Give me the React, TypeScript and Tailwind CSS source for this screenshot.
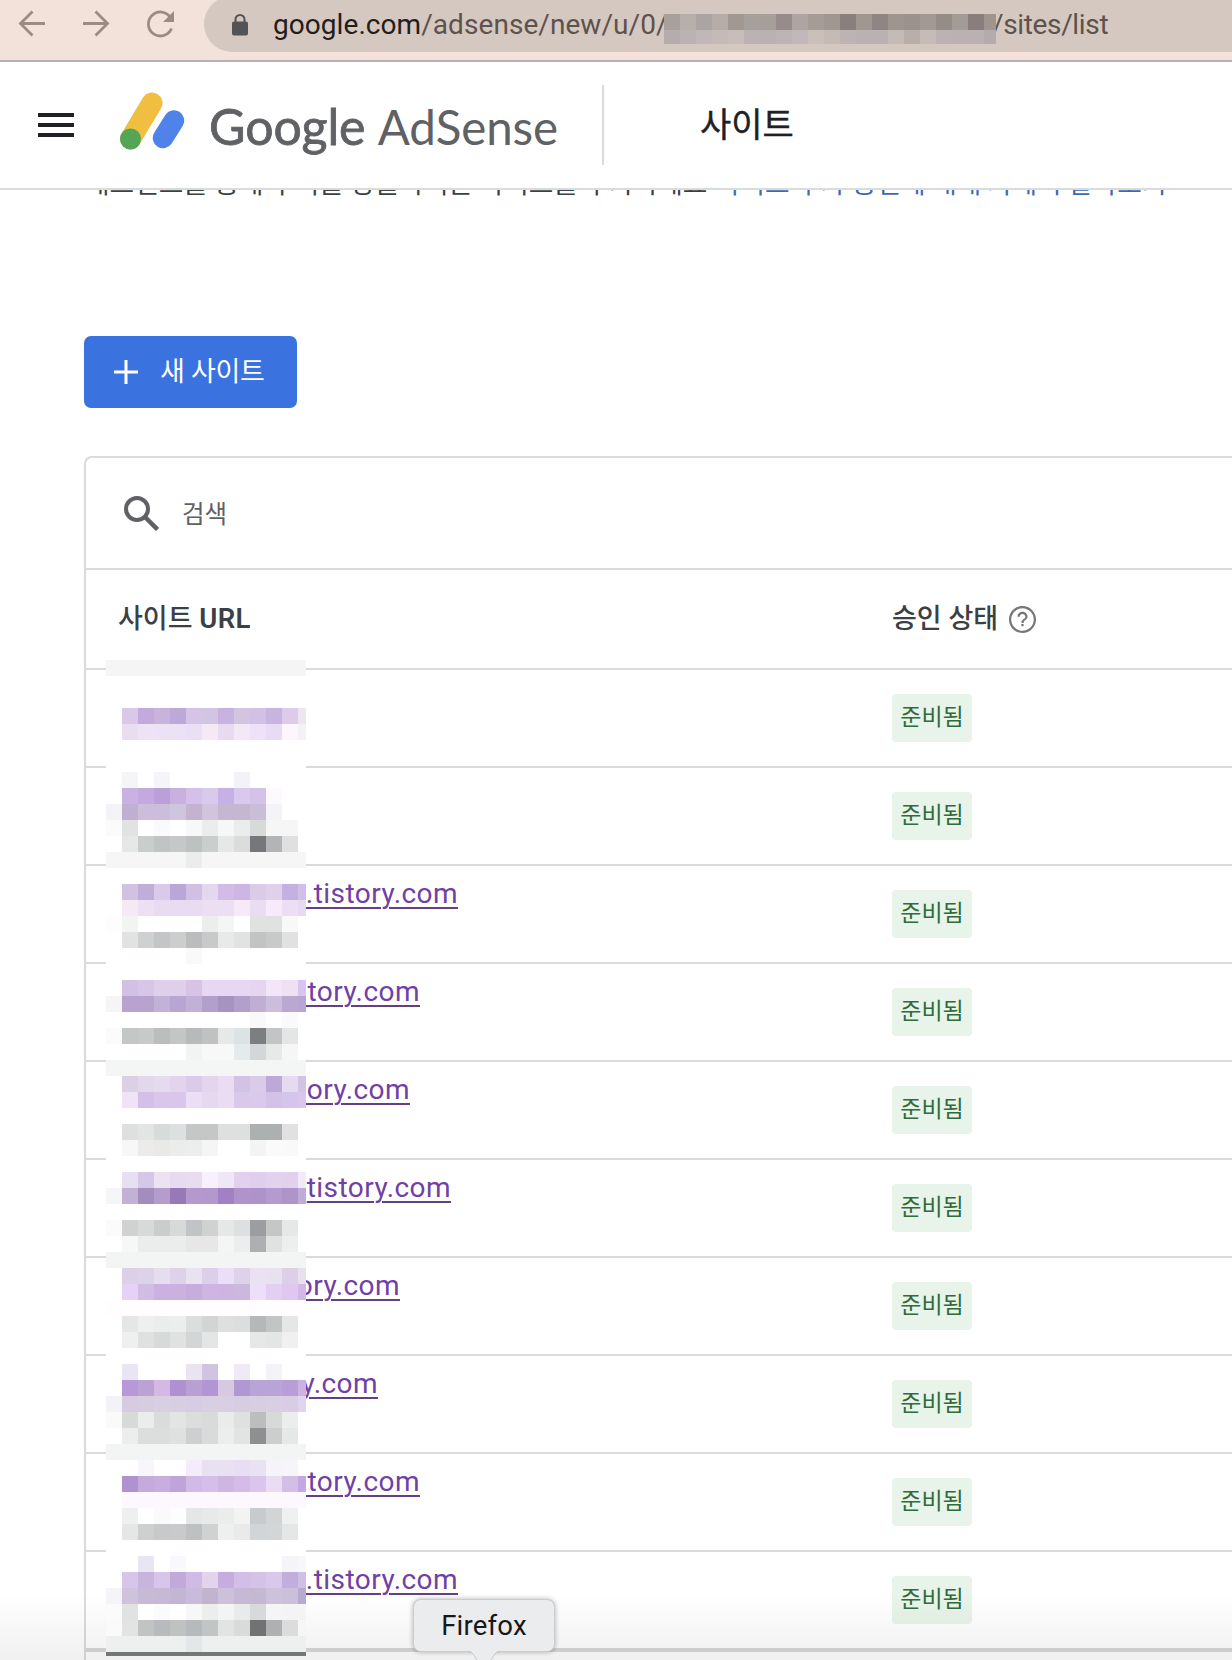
import React from "react";

const W = "fff";

/* Pixelated censor blocks: one string per 16px row, 13 cells (the last one is half width). */
const MOSAIC: string[] = [
  "f5f5f5*",
  W + "*",
  W + "*",
  "fff dac8e8 c2aadc c8b3dd bda8da d5c4e8 d1c5e4 c8b2e0 d1c5e0 d1c1e4 c7b5df decbea ebe6f1",
  "fff e9ddf1 ede3f5 ede1f5 ede1f5 ebdff5 f6e8f5 e8daf1 f3e8f7 eee1f8 e8dbf4 fdf6fd f4f2f5",
  W + "*",
  W + "*",
  "fff f5f4f7 fff f5f4f8 fff fff fff fff f3f2f9 fff fff fff fff",
  "fff c9b1e2 c3a9df bb9fd9 c8b1df d5c0ea d9c9ec c7b0e5 dac9ef d4c2e9 fcfafc fff fff",
  "f4f3f8 bfb0d3 ccbddb ccbddb d0c5de c3b3d1 d2c4de c5b6d2 c5b6d2 cabdd9 f3f3f8 fff fff",
  "fbfbfb e0e3e2 fff fafafc fff f7f8f7 ebedec f6f7f7 ebecec d8dada f6f6f6 f5f6f5 fff",
  "fff e6e7e7 c9cdcc c1c4c5 c6c7c9 bdc1c0 cacecd e6e7e7 dbdddd 75777a b3b4b5 e0e0e0 fff",
  "f5f6f5 f5f6f5 f5f6f5 f5f6f5 f5f6f5 ebecec f5f6f5 f5f6f5 f5f6f5 f5f6f5 f5f6f5 f5f6f5 f5f6f5",
  W + "*",
  "fff d1c2e1 c1add9 dac9ea bba7d7 d2c0e4 e4d8ee d2bce7 cdb6e4 dbcbe7 e1d0eb c5b0e2 d1bfe7",
  "fff f6e9f5 ede0f2 e9dcf2 e9dcf2 e9dbf2 ecdff4 ecdff4 f7e9f7 eadcf2 f8e9fb eddff3 e8d9f1",
  "fdfdfd f2f4f3 fff fff fff fff ededed f4f6f5 fff e0e1e1 e0e1e1 f8f8f8 fff",
  "fff e1e3e2 ced1d1 c3c5c6 cbcecd babcbe c8caca e8e9e8 e1e2e2 c2c4c3 c8cac9 e1e1e2 fff",
  "fff fff fff fff fff f9f9f9 fff fff fff fff fff fff fff",
  W + "*",
  "fff d1c1e5 d7c6e8 dfcfea dfcfea d8c3e6 e7d7f2 e7d7f2 e7d7f2 e5d5f1 f1e7f8 eee1f4 d7c4ef",
  "f5f5f7 b8a2ce b8a2ce c3b2d8 b8a5d2 c2b1d7 b2a0cb a893be b2a0ca c1aed3 cbbddb baa8d2 b9a5d3",
  "fff fff fff fff fff fff fff fff fff f9f9f9 fff fafafa fff",
  "fafbfa c3c7c6 c7cac9 babebc c4c6c5 b7babb c0c2c1 e6e9e7 dce3e4 7b7f7f c2c4c5 e4e5e5 fff",
  "fff fff fff fff fff f2f3f3 f8f8f8 f8f8f8 e5eaea d4d7da e7e8e8 f6f6f6 fff",
  "f4f5f5*",
  "fff dcd0e6 e1d8ec e4dbee e2d4ed dacbe8 e3d5ee e9dcf3 d2c3e6 d9cbea bca9d7 e6daf1 d1c3e3",
  "fff f1e3f6 d4bfe8 dac6eb dac6eb ecdff5 e5d8ef eadcf2 d9c8e9 dac9eb d4c1e8 d6c5ea d9c6ea",
  W + "*",
  "fff dee0e0 e3e5e5 d7dbda dce0e0 c5c7c6 c5c7c6 dedfdf dedfdf adb0b1 adb0b1 e1e1e1 fff",
  "fff f7f7f7 ebecea e9eae8 ebedeb eceeed f4f5f4 fff fff f3f5f4 fafafa f9f9f9 fff",
  W + "*",
  "fff e6e0f2 d5c8e7 ede2f2 e6dbf0 e8ddf0 f7f0fd eee7f6 e2d0ec e0cfec e2d2ed e1d1ec f1ebf7",
  "f5f6f7 c2b0d5 a38dba b49ccc 9779b8 b499cf b298cf a180c3 b093cb ae93cb b49bcf ae94c9 c1acd7",
  W + "*",
  "fbfbfb d0d2d1 d8dad9 c9cdcc d8d9d9 c1c4c6 d0d2d1 e6e8e7 dce0e0 9b9da0 c5c7c7 e5e8e6 fff",
  "fff f6f8f7 eaedeb ebedec ebedec e6e7e6 e6e7e6 f4f5f4 eceeed adafb0 e0e2e1 edefee fff",
  "f3f4f4*",
  "fff dbd0e8 dcd3e8 e4deef ddd2ea e8e3f1 dccfe9 ebdef7 ded1ea eae2f2 e8e2f0 dbd0e8 e6e1ec",
  "fff e5d2f6 d1bce3 cab1e0 cab1e0 c7addd cfb5e4 cdb4e1 ccb7dd eddff9 e2cff1 dfc7ef d1b8e6",
  "fffdff*",
  "fff e5e7e6 eeefee ebecec ebeeec dcdedd d3d5d4 dedfde dcdedd b5b7b9 c3c5c5 e5e7e6 fff",
  "fff eeefee dfe1e0 d6dad9 e0e2e1 d2d6d6 e4e6e5 fff fff e6e8e7 e2e6e4 f0f0f0 fff",
  W + "*",
  "fff eae5f2 fff fff fff eae4f1 d1c4e0 fff efeaf6 fff f4f3f7 fff fff",
  "fff b699d6 baa3d4 d3b9e3 af91d1 b8a0d5 b296d3 d7c8e3 b098d2 b9a4d8 b9a4d8 b89ed8 cbb2e2",
  "f3f3f7 d7cbe2 d7cde1 d8cfe2 d7cee1 d7cde2 d8cfe2 d8cfe2 d7cde1 d7cee2 d8cfe3 d8cde3 e1d4ee",
  "fafafa d8dad9 ebecec dadcdb e3e5e4 dcdedd d9dbda eaebeb dfe0e0 bbbebd d8dad9 eceeed fff",
  "fff ecedec dcdedd dbdedd dfe1e0 cdcfd1 d9dbda ecedec e2e4e3 8d8f90 cccecd e4e8e6 fff",
  "f3f4f4*",
  "fff fff f8f5fb fff fff f4ecfb e8e1f1 e8e1f1 e8def3 e9e2f2 f6f4fa f6f5fa fff",
  "fff af92cf c4abdc c8aedf bea4d9 d1bbe6 d3bfe7 ceb6e3 d5bce7 dac5ed eadcf4 d3bee5 c4a8e1",
  "fff fdf8fd fdf8fd fdf8fd fdf8fd fdf8fd fdf8fd fdf8fd fdf8fd fdf8fd fdf8fd fdf8fd fdf8fd",
  "fff eeefef fff fafafa fdfdfd e5e6e6 e8e9e9 ebecec f3f3f2 c8cbcd d2d4d5 eff1f0 fff",
  "fff e5e7e6 cdd0cf c7c9ca c8cacb bdc1c1 d0d2d1 eeefee e9eaea d2d5d7 d3d6d6 e5e7e6 fff",
  W + "*",
  "fff fff e8e6f2 fff f9f8fc fff fff fff fff fff fff f5f5f9 f8f8fa",
  "fff d8c6ea c8b4dc d8c5ea c1a9da d0bbe5 e3d3ed c7acdf d3bee7 d5c2e7 d9c8e9 c2addd cfc0e3",
  "f5f4f8 cfc2dc c7bad6 c7b9d6 c3b5d4 c8bbdb c2b4d1 cdc1da c7b8d5 c5b8d3 cec1dc cbbfdb b8a9cf",
  "fbfbfb e0e3e2 fff fbfbfc fff f7f7f7 eceeec f4f4f4 e9eaea d8d9da f5f5f5 f4f4f4 f4f4f4",
  "fafafa e2e4e3 c2c4c4 b8bbbd c0c2c2 b6babc c2c5c5 e2e4e3 d9dbda 707274 aeb0b2 dcdcdc f6f6f6",
  "eeefef eeefef eeefef eeefef eeefef e4e7e7 eeefef eeefef eeefef eeefef eeefef eeefef eeefef",
];

const URL_TOP =
  "a8a09b b8aeaa aca4a2 b6aca8 a19891 a79f99 a69e98 978c8b aea5a3 a59c97 a19791 8a7f7c a09791 908583 9e958f 9b928e a29994 958c86 a39b96 897e7c 9f958e";
const URL_BOTTOM =
  "b5acab bbb2b1 c0b7b6 c5bab6 c8bdb9 bdb2b3 bbb1b1 beb4b5 c2b7b9 cabfb9 c5bab4 bdb3b2 bbb1b1 bbb1b2 c4bab6 b9aea8 c6bbb7 bcb1b3 bcb1b0 bcb1b1 b6abac";

const LINKS: { host: string; end: number }[] = [
  { host: "", end: 0 },
  { host: "", end: 0 },
  { host: ".tistory.com", end: 458 },
  { host: "story.com", end: 420 },
  { host: "tory.com", end: 410 },
  { host: "tistory.com", end: 451 },
  { host: "ory.com", end: 400 },
  { host: "y.com", end: 378 },
  { host: "story.com", end: 420 },
  { host: ".tistory.com", end: 458 },
];

function cells(row: string): string[] {
  if (row.endsWith("*")) return Array(13).fill(row.slice(0, -1));
  return row.split(" ");
}

function Mosaic() {
  return (
    <div className="absolute top-[660px] left-[106px] w-[200px] overflow-hidden">
      {MOSAIC.map((row, r) => (
        <div key={r} className="flex h-4">
          {cells(row).map((c, i) => (
            <div key={i} className="h-4 w-4 shrink-0" style={{ backgroundColor: "#" + c }} />
          ))}
        </div>
      ))}
      <div className="h-1 bg-[#757676]" />
    </div>
  );
}

function UrlMosaic() {
  return (
    <div className="absolute top-[14px] left-[664px] w-[332px] overflow-hidden">
      {[URL_TOP, URL_BOTTOM].map((row, r) => (
        <div key={r} className={r === 0 ? "flex h-4" : "flex h-[14px]"}>
          {row.split(" ").map((c, i) => (
            <div key={i} className="h-full w-4 shrink-0" style={{ backgroundColor: "#" + c }} />
          ))}
        </div>
      ))}
    </div>
  );
}

function BrowserBar() {
  return (
    <div className="relative flex h-[62px] shrink-0 border-b-2 border-[#bab0ae] bg-[#f3e2da]">
      <svg className="h-[60px] w-[204px] shrink-0" viewBox="0 0 204 60" fill="none" stroke="#9a8c84" strokeWidth="2.8">
        <path d="M45 23.500H21M32.500 11.500L20.500 23.500L32.500 35.500" />
        <path d="M83 23.500H107M95.500 11.500L107.500 23.500L95.500 35.500" />
        <path d="M170.500 17.500A12 12 0 1 0 171.500 28.500" />
        <path d="M174 11V22H163Z" fill="#9a8c84" stroke="none" />
      </svg>
      <div className="-mt-1 flex h-14 flex-1 items-center rounded-l-full bg-[#d5c8c0] pl-7">
        <svg className="mt-[2px] h-[22px] w-4" viewBox="0 0 16 22">
          <path d="M3.500 9V5.500a4.500 4.500 0 0 1 9 0V9" fill="none" stroke="#515356" strokeWidth="2" />
          <rect x="0" y="7.500" width="16" height="14" rx="2" fill="#515356" />
        </svg>
        <div className="ml-[25px] flex h-14 flex-1 items-center">
          <span className="mt-[2px] w-[391px] text-[28px] tracking-[0.060px] whitespace-nowrap text-[#5e524d]">
            <span className="text-[#231d1b]">google.com</span>/adsense/new/u/0/
          </span>
          <span className="mt-[2px] ml-[328px] text-[28px] tracking-[-0.350px] text-[#5e524d]">/sites/list</span>
        </div>
      </div>
      <UrlMosaic />
    </div>
  );
}

function Header() {
  return (
    <header className="relative z-10 flex h-32 shrink-0 items-center border-b-2 border-[#dadcdc] bg-white">
      <div className="ml-[38px] flex w-9 flex-col gap-[6px]">
        <div className="h-1 bg-[#202124]" />
        <div className="h-1 bg-[#202124]" />
        <div className="h-1 bg-[#202124]" />
      </div>
      <svg className="mt-[-9px] ml-[46px] h-[58px] w-[65px]" viewBox="0 0 65 58" fill="none" strokeLinecap="round">
        <path d="M10.500 47L32 11" stroke="#f0bf42" strokeWidth="21" />
        <path d="M43 46L54 28.500" stroke="#5083ea" strokeWidth="20.500" />
        <circle cx="10.500" cy="47" r="10.500" fill="#55a557" />
      </svg>
      <div className="mt-[3px] ml-6 flex w-[349px] items-baseline font-['Lato'] text-[50px] text-[#5f6164]">
        <span className="w-[169px] tracking-[-0.100px] [-webkit-text-stroke:0.8px_#5f6164]">Google</span>
        <span className="text-[47.500px] tracking-[-0.100px]">AdSense</span>
      </div>
      <div className="ml-[44px] h-20 w-[2px] bg-[#dadcdc]" />
      <h1 className="ml-[96px] text-[34px] text-[#202124] [-webkit-text-stroke:0.4px_#202124]">사이트</h1>
    </header>
  );
}

function Row({ host, end, last }: { host: string; end: number; last: boolean }) {
  return (
    <div className={last ? "flex h-[100px] border-b-4 border-[#d8d8d8]" : "flex h-[98px] border-b-2 border-[#dadada]"}>
      <div className="w-[806px] pt-[11px]">
        {host && (
          <div className="flex justify-end" style={{ width: end - 86 }}>
            <a className="text-[28px] leading-[34px] tracking-[0.450px] whitespace-nowrap text-[#7040a5] underline decoration-[#643f84] decoration-2 underline-offset-[4px]">
              {host}
            </a>
          </div>
        )}
      </div>
      <div className="mt-6 flex h-12 w-20 items-center justify-center rounded bg-[#e8f3ea] text-[23px] text-[#2f6b3c]">
        준비됨
      </div>
    </div>
  );
}

function Tooltip() {
  return (
    <div className="absolute top-[1599px] left-[413px] flex h-[53px] w-[142px] items-center justify-center rounded-lg border border-[#cbcccd] bg-[#ebeced] text-[27.500px] tracking-[0.200px] text-[#17181a] shadow-[0_0_5px_rgba(0,0,0,0.3)]">
      Firefox
      <svg className="absolute top-[50px] left-[54px] h-[10px] w-8" viewBox="0 0 32 10">
        <path d="M0 0V1C5 1 6 6 9 10H23C26 6 27 1 32 1V0Z" fill="#ebeced" />
        <path d="M0 1.500C5 1.500 6 6 9 10M23 10C26 6 27 1.500 32 1.500" fill="none" stroke="#c4c5c6" />
      </svg>
    </div>
  );
}

export default function App() {
  return (
    <div className="relative flex h-[1660px] w-[1232px] flex-col overflow-hidden bg-white font-[Roboto,'Noto_Sans_CJK_KR',sans-serif]">
      <BrowserBar />
      <Header />
      <main className="flex shrink-0 flex-col pl-[84px]">
        <p className="-mt-[26px] h-10 pl-px text-[26.700px] leading-10 whitespace-nowrap text-[#3c4043]">
          애드센스를 통해 수익을 창출하려는 사이트를 추가하세요{" "}
          <a className="ml-[2px] text-[#3d68b5]">사이트 추가 승인에 대해 자세히 알아보기</a>
        </p>
        <button className="mt-[132px] flex h-[72px] w-[213px] items-center rounded-[7px] bg-[#3a72e0] pl-[30px] text-white">
          <svg className="h-6 w-6" viewBox="0 0 24 24" stroke="white" strokeWidth="3">
            <path d="M12 0V24M0 12H24" />
          </svg>
          <span className="ml-[22px] text-[27px] tracking-[-0.300px] whitespace-nowrap">새 사이트</span>
        </button>
        <section className="mt-12 h-[1204px] rounded-tl-lg border-t-2 border-l-2 border-[#dadcdc]">
          <div className="flex h-28 items-center border-b-2 border-[#dadada] pl-[38px] text-[#5f6164]">
            <svg className="h-[35px] w-[35px]" viewBox="0 0 35 35" fill="none" stroke="#5f6164">
              <circle cx="13" cy="13" r="11" strokeWidth="4" />
              <path d="M21 21L33.500 33.500" strokeWidth="4.500" />
            </svg>
            <span className="mt-[4px] ml-[23px] text-[24.500px]">검색</span>
          </div>
          <div className="flex h-[100px] items-center border-b-2 border-[#dadada] text-[27px] font-medium text-[#3c4043]">
            <span className="w-[774px] pl-8">
              사이트 <span className="text-[27.500px] font-semibold tracking-[0.400px]">URL</span>
            </span>
            <span className="ml-8">승인 상태</span>
            <svg className="mt-px ml-[11px] h-[27px] w-[27px]" viewBox="0 0 24 24" fill="#757779">
              <path d="M11 18h2v-2h-2v2zm1-18C5.370 0 0 5.370 0 12s5.370 12 12 12 12-5.370 12-12S18.630 0 12 0zm0 22C6.480 22 2 17.520 2 12S6.480 2 12 2s10 4.480 10 10-4.480 10-10 10zm0-17c-2.500 0-4.500 2-4.500 4.500h2c0-1.400 1.100-2.500 2.500-2.500s2.500 1.100 2.500 2.500c0 2.300-3.500 2-3.500 5.500h2c0-2.500 3.500-2.800 3.500-5.500C16.500 7 14.500 5 12 5z" />
            </svg>
          </div>
          {LINKS.map((l, i) => (
            <Row key={i} host={l.host} end={l.end} last={i === LINKS.length - 1} />
          ))}
        </section>
      </main>
      <div className="pointer-events-none absolute inset-x-0 bottom-0 h-[66px] bg-linear-to-b from-transparent to-black/6" />
      <Mosaic />
      <Tooltip />
    </div>
  );
}
